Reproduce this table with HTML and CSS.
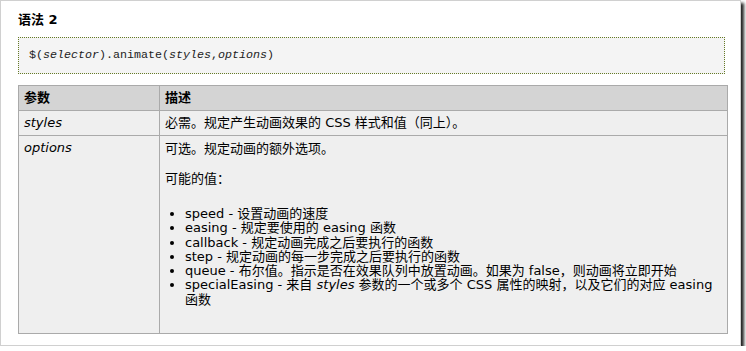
FILE: index.html
```html
<!DOCTYPE html>
<html>
<head>
	<title>animate() 语法</title>
	<meta http-equiv="Content-Type" content="text/html;charset=utf-8">
	<link rel="stylesheet" href="styles.css">
</head>
<body>
	<div class="shot">
		<h2 class="title">语法 2</h2>
		<pre class="code">$(<i>selector</i>).animate(<i>styles</i>,<i>options</i>)</pre>
		<table class="params">
			<tr>
				<th class="name">参数</th>
				<th>描述</th>
			</tr>
			<tr>
				<td><i>styles</i></td>
				<td>必需。规定产生动画效果的 CSS 样式和值（同上）。</td>
			</tr>
			<tr>
				<td><i>options</i></td>
				<td class="desc">
					<p>可选。规定动画的额外选项。</p>
					<p>可能的值：</p>
					<ul>
						<li>speed - 设置动画的速度</li>
						<li>easing - 规定要使用的 easing 函数</li>
						<li>callback - 规定动画完成之后要执行的函数</li>
						<li>step - 规定动画的每一步完成之后要执行的函数</li>
						<li>queue - 布尔值。指示是否在效果队列中放置动画。如果为 false，则动画将立即开始</li>
						<li>specialEasing - 来自 <i>styles</i> 参数的一个或多个 CSS 属性的映射，以及它们的对应 easing 函数</li>
					</ul>
				</td>
			</tr>
		</table>
	</div>
</body>
</html>
```

FILE: styles.css
```css
body{margin:0;background:#fff;font-family:"DejaVu Sans","Noto Sans CJK SC",sans-serif;font-size:13px;color:#000;}

/* 截图外框 + 阴影 */
.shot{box-sizing:border-box;width:741px;height:346px;padding:11px 0 0 17px;border:1px solid #d0d0d0;background:#fff;box-shadow:3px 3px 3px #222;}

.title{margin:0;font-size:13px;line-height:16px;font-weight:bold;}

.code{box-sizing:border-box;width:707px;margin:9px 0 0;padding:10px;border:1px dotted #667a26;background:#f4f4f4;font-family:"Liberation Mono",monospace;font-size:11.67px;line-height:15px;color:#222;}

.params{width:710px;margin-top:11px;border-collapse:collapse;}
.params th,.params td{padding:5px;border:1px solid #aaa;text-align:left;vertical-align:top;line-height:14px;}
.params th{background:#d4d4d4;font-weight:bold;}
.params td{background:#efefef;}
.params .name{width:130px;}

.desc p{margin:0 0 16px;}
.desc p:first-child{margin-top:1px;}
.desc p + p{margin-bottom:21px;}
.desc ul{margin:0 0 21px;padding-left:20px;}
.desc li{line-height:14.3px;}
```
